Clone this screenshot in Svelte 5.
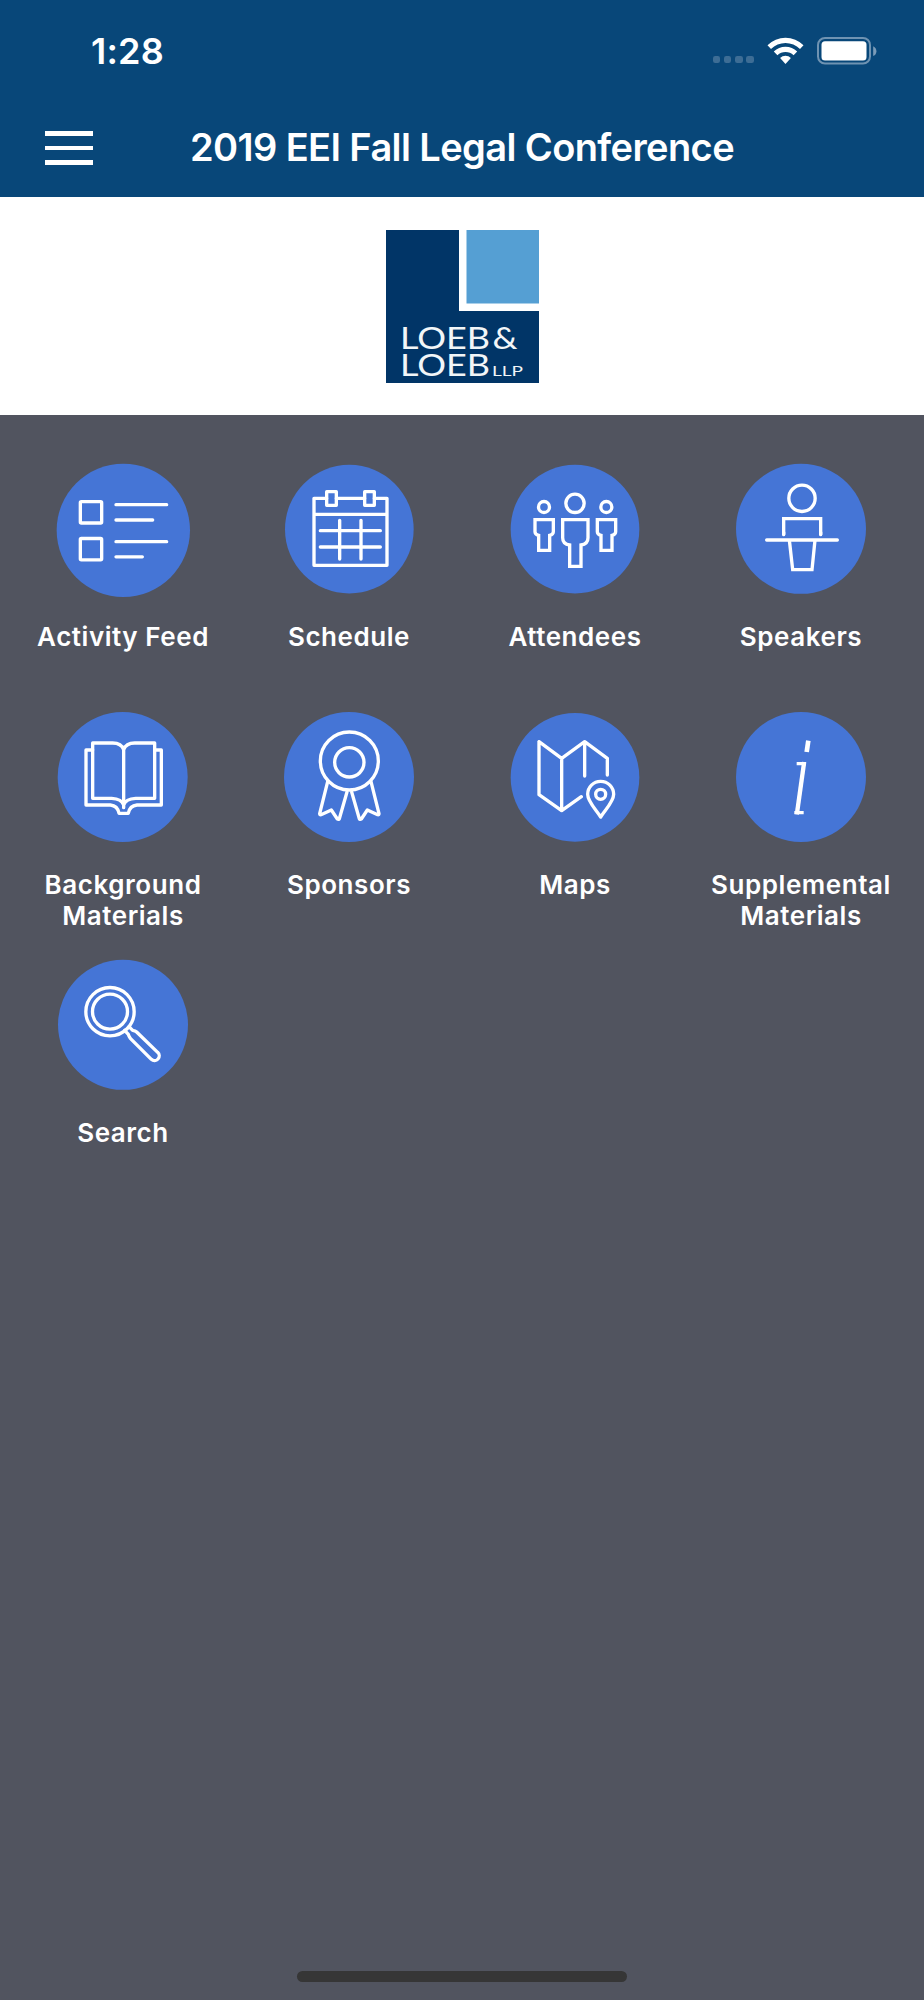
<script lang="ts">
  type Item = { id: string; label: string; cx: number; cy: number; r: number }

  // circle geometry is in the 420-unit icon viewBox
  const items: Item[] = [
    { id: 'feed', label: 'Activity Feed', cx: 211, cy: 214, r: 200 },
    { id: 'schedule', label: 'Schedule', cx: 211, cy: 210.5, r: 193 },
    { id: 'attendees', label: 'Attendees', cx: 210, cy: 210.5, r: 193 },
    { id: 'speakers', label: 'Speakers', cx: 210, cy: 209.5, r: 195 },
    { id: 'background', label: 'Background Materials', cx: 209, cy: 210, r: 195 },
    { id: 'sponsors', label: 'Sponsors', cx: 210, cy: 210, r: 195 },
    { id: 'maps', label: 'Maps', cx: 210, cy: 211, r: 193 },
    { id: 'supplemental', label: 'Supplemental Materials', cx: 210, cy: 210, r: 195 },
    { id: 'search', label: 'Search', cx: 210, cy: 209.5, r: 195 }
  ]
</script>

<div class="screen">
  <header>
    <div class="status">
      <span class="time">1:28</span>
      <div class="indicators">
        <div class="dots"><i></i><i></i><i></i><i></i></div>
        <svg class="wifi" viewBox="0 0 37 28">
          <path d="M.5 8.200a25.500 25.500 0 0 1 36 0l-3.500 3.800a20.500 20.500 0 0 0-29 0z" />
          <path d="M6.800 14.600a16.700 16.700 0 0 1 23.400 0l-3.600 3.700a11.600 11.600 0 0 0-16.200 0z" />
          <path d="M13.100 20.900a7.900 7.900 0 0 1 10.800 0L18.500 27z" />
        </svg>
        <svg class="battery" viewBox="0 0 60 28">
          <rect x="1" y="1" width="52" height="25.500" rx="7" />
          <rect class="level" x="4.500" y="4.200" width="45" height="19.300" rx="3.500" />
          <path class="level cap" d="M56.200 9.200q3.200 1.600 3.200 5t-3.200 4.800z" />
        </svg>
      </div>
    </div>
    <nav>
      <button class="menu" aria-label="Menu"><span></span><span></span><span></span></button>
      <h1>2019 EEI Fall Legal Conference</h1>
    </nav>
  </header>

  <section class="banner">
    <svg class="logo" viewBox="0 0 153 153">
      <path fill="#013567" d="M0 0h73v81h80v72H0z" />
      <path fill="#559fd3" d="M80.500 0H153v73.500H80.500z" />
      <g class="wordmark">
        <text x="14" y="118.600" font-size="30" textLength="90" lengthAdjust="spacingAndGlyphs">LOEB</text>
        <text x="106.500" y="118.600" font-size="30" textLength="25" lengthAdjust="spacingAndGlyphs">&amp;</text>
        <text x="14" y="146" font-size="30" textLength="90" lengthAdjust="spacingAndGlyphs">LOEB</text>
        <text x="106" y="146" font-size="14" textLength="31" lengthAdjust="spacingAndGlyphs">LLP</text>
      </g>
    </svg>
  </section>

  <main>
    {#each items as item (item.id)}
      <a class="tile" href="#{item.id}">
        <svg class="icon" viewBox="0 0 420 420">
          <circle class="disc" cx={item.cx} cy={item.cy} r={item.r} />
          {#if item.id === 'feed'}
            <rect x="82" y="128" width="64" height="64" rx="3" />
            <rect x="82" y="238.500" width="64" height="64" rx="3" />
            <path d="M189 137h152M189 183h110M189 248h152M189 293.500h79" />
          {:else if item.id === 'schedule'}
            <path d="M143 118h-38v201h219V118h-38M172 118h85M105 166h219" />
            <rect x="143" y="98" width="29" height="41" />
            <rect x="257" y="98" width="29" height="41" />
            <path d="M182 184v116M246 184v116M124 215h180M124 264h180" />
          {:else if item.id === 'attendees'}
            <circle cx="117" cy="144" r="16.500" />
            <circle cx="304" cy="144" r="16.500" />
            <circle cx="210" cy="133" r="27.500" />
            <g class="sharp">
              <path d="M173 182h76v54q0 19-21 22v64h-34v-64q-21-3-21-22z" />
              <path d="M90 182h55v36q0 8-11 11v45h-33v-45q-11-3-11-11z" />
              <path d="M277 182h55v36q0 8-11 11v45h-33v-45q-11-3-11-11z" />
            </g>
          {:else if item.id === 'speakers'}
            <circle cx="213" cy="118" r="39.500" />
            <g class="sharp"><path d="M158 227v-48h111v48M175 243l10 89h58l9-89" /></g>
            <path d="M107 243h212M158 220v7M269 220v7" />
          {:else if item.id === 'background'}
            <path d="M212 128q-7-20-33-20h-60v166h57q30 1 36 20M212 128q7-20 33-20h60v166h-57q-30 1-36 20M212 126v176" />
            <path d="M119 129H99v165h73q22 2 26 25h28q4-23 26-25h73V129h-20" />
          {:else if item.id === 'sponsors'}
            <circle cx="211" cy="162" r="87" />
            <circle cx="211" cy="166" r="44" />
            <path d="M146 224l-24 96q0 4 4 3l31-14 18 27q4 3 6-1l23-80" />
            <path d="M276 224l24 96q0 4-4 3l-31-14-18 27q-4 3-6-1l-23-80" />
          {:else if item.id === 'maps'}
            <path d="M102 104l68 50 69-50 68 50v50M102 104v159l68 48 59-42M170 154v157M239 104v103" />
            <path d="M287 330C272 307 248 284 248 262a39 39 0 0 1 78 0C326 284 302 307 287 330z" />
            <circle cx="287" cy="262" r="15" />
          {:else if item.id === 'supplemental'}
            <g class="sharp">
              <path d="M232 101l-5 34" stroke-width="14" />
              <path d="M219.500 165l-22 157" stroke-width="13" />
              <path d="M197 170h28M190 317h28" />
            </g>
          {:else}
            <circle cx="171" cy="170" r="72.500" />
            <circle cx="171" cy="170" r="52.500" />
            <path d="M228 215l11 11q8 1 12 5l63 61a14 14 0 0 1-19 21l-63-63q-5-8-6-12l-11-12" />
          {/if}
        </svg>
        <span class="label">{item.label}</span>
      </a>
    {/each}
  </main>

  <div class="home"></div>
</div>

<style>
  :global(body) { margin: 0; background: #51545f; }
  .screen {
    box-sizing: border-box; width: 924px; height: 2000px; display: flex; flex-direction: column;
    background: #51545f; color: #fff; font-family: Inter, "Liberation Sans", sans-serif;
  }
  header { height: 197px; background: #084779; flex: none; }
  .status { display: flex; justify-content: space-between; height: 99px; padding: 0 47px 0 91px; }
  .time { font-size: 36px; font-weight: 600; line-height: 44px; margin-top: 29px; letter-spacing: 0.2px; }
  .indicators { display: flex; align-items: flex-start; padding-top: 36.5px; }
  .dots { display: flex; gap: 3.700px; margin: 19px 13px 0 0; }
  .dots i { width: 7.600px; height: 7.600px; border-radius: 2.200px; background: #3d6d95; }
  .wifi { width: 37px; height: 28px; fill: #fff; margin-right: 13px; }
  .battery { width: 60px; height: 28px; fill: none; stroke: #6f93b2; stroke-width: 2; }
  .battery .level { fill: #fff; stroke: none; }
  .battery .cap { fill: #7c9cb8; }

  nav { display: flex; align-items: center; height: 97px; padding: 0 45px; }
  .menu { display: flex; flex-direction: column; gap: 10px; width: 48px; padding: 0; border: 0; margin-top: 1px; background: none; }
  .menu span { height: 4.700px; background: #fff; }
  h1 { flex: 1; margin: -2px 48px 0 0; text-align: center; font-size: 38px; font-weight: 600; line-height: 46px; letter-spacing: -0.6px; white-space: nowrap; }

  .banner { height: 218px; flex: none; display: flex; justify-content: center; padding-top: 33px; box-sizing: border-box; background: #fff; }
  .logo { width: 153px; height: 153px; }
  .wordmark { fill: #f2f6f8; font-family: Lato, sans-serif; font-weight: 400; }

  main { display: grid; grid-template-columns: repeat(4, 226px); grid-auto-rows: 248px; padding: 44px 10px 0; flex: 1; align-content: start; }
  .tile { display: flex; flex-direction: column; align-items: center; color: inherit; text-decoration: none; }
  .icon { width: 140px; height: 140px; flex: none; fill: none; stroke: #fff; stroke-width: 10; stroke-linecap: round; stroke-linejoin: round; }
  .icon .disc { fill: #4575d6; stroke: none; }
  .sharp { stroke-linecap: butt; stroke-linejoin: miter; }
  .label { margin-top: 21.500px; width: 200px; text-align: center; font-size: 26px; font-weight: 600; line-height: 31.500px; letter-spacing: 0.55px; }

  .home { width: 330px; height: 11px; border-radius: 6px; background: #363636; margin: 0 auto 18px; flex: none; }
</style>
